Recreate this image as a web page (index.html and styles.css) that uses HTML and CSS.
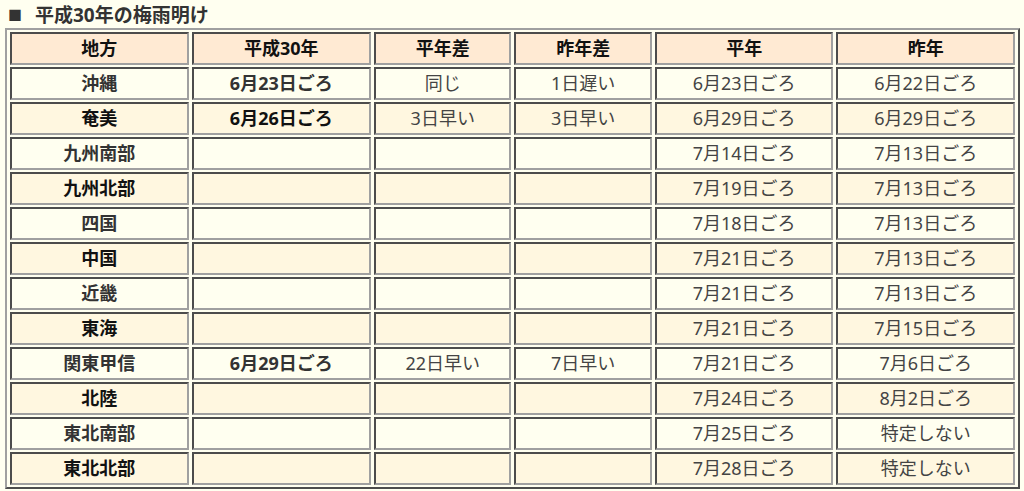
FILE: index.html
```html
<!DOCTYPE html>
<html lang="ja">
<head>
<meta charset="utf-8">
<title>平成30年の梅雨明け</title>
<link rel="stylesheet" href="styles.css">
</head>
<body>
<h2 class="title"><span class="mark">■</span>平成30年の梅雨明け</h2>
<table class="tsuyu">
<thead>
<tr><th class="c1">地方</th><th class="c2">平成30年</th><th class="c3">平年差</th><th class="c4">昨年差</th><th class="c5">平年</th><th class="c6">昨年</th></tr>
</thead>
<tbody>
<tr class="odd"><td class="b">沖縄</td><td class="b">6月23日ごろ</td><td>同じ</td><td>1日遅い</td><td>6月23日ごろ</td><td>6月22日ごろ</td></tr>
<tr class="even"><td class="b">奄美</td><td class="b">6月26日ごろ</td><td>3日早い</td><td>3日早い</td><td>6月29日ごろ</td><td>6月29日ごろ</td></tr>
<tr class="odd"><td class="b">九州南部</td><td></td><td></td><td></td><td>7月14日ごろ</td><td>7月13日ごろ</td></tr>
<tr class="even"><td class="b">九州北部</td><td></td><td></td><td></td><td>7月19日ごろ</td><td>7月13日ごろ</td></tr>
<tr class="odd"><td class="b">四国</td><td></td><td></td><td></td><td>7月18日ごろ</td><td>7月13日ごろ</td></tr>
<tr class="even"><td class="b">中国</td><td></td><td></td><td></td><td>7月21日ごろ</td><td>7月13日ごろ</td></tr>
<tr class="odd"><td class="b">近畿</td><td></td><td></td><td></td><td>7月21日ごろ</td><td>7月13日ごろ</td></tr>
<tr class="even"><td class="b">東海</td><td></td><td></td><td></td><td>7月21日ごろ</td><td>7月15日ごろ</td></tr>
<tr class="odd"><td class="b">関東甲信</td><td class="b">6月29日ごろ</td><td>22日早い</td><td>7日早い</td><td>7月21日ごろ</td><td>7月6日ごろ</td></tr>
<tr class="even"><td class="b">北陸</td><td></td><td></td><td></td><td>7月24日ごろ</td><td>8月2日ごろ</td></tr>
<tr class="odd"><td class="b">東北南部</td><td></td><td></td><td></td><td>7月25日ごろ</td><td>特定しない</td></tr>
<tr class="even"><td class="b">東北北部</td><td></td><td></td><td></td><td>7月28日ごろ</td><td>特定しない</td></tr>
</tbody>
</table>
</body>
</html>
```

FILE: styles.css
```css
html, body {
  margin: 0;
  padding: 0;
  background: #fffff0;
}
body {
  padding: 1px 5px 0 5px;
  font-family: "Noto Sans", "Noto Sans CJK JP", sans-serif;
  color: #444;
}
.title {
  display: flex;
  align-items: center;
  height: 26px;
  margin: 0 0 1px 3px;
  font-size: 19px;
  font-weight: bold;
  color: #333;
}
.mark {
  width: 27px;
  font-size: 14px;
}
.tsuyu {
  width: 1015px;
  border-collapse: separate;
  border-spacing: 3px 2px;
  border: 2px outset #a0a0a0;
  font-size: 18px;
  table-layout: fixed;
}
.tsuyu th, .tsuyu td {
  border: 2px inset #a0a0a0;
  height: 29px;
  padding: 0;
  text-align: center;
  line-height: 29px;
  font-weight: normal;
}
.tsuyu th {
  background: #ffead3;
  font-weight: bold;
  color: #111;
}
.c1, .c5, .c6 { width: 174px; }
.c2 { width: 175px; }
.c3, .c4 { width: 133px; }
.tsuyu tr.odd td { background: #fffff0; }
.tsuyu tr.even td { background: #fff7e0; }
.tsuyu td.b { font-weight: bold; color: #333; }
.tsuyu tr.even td.b { color: #111; }
```
